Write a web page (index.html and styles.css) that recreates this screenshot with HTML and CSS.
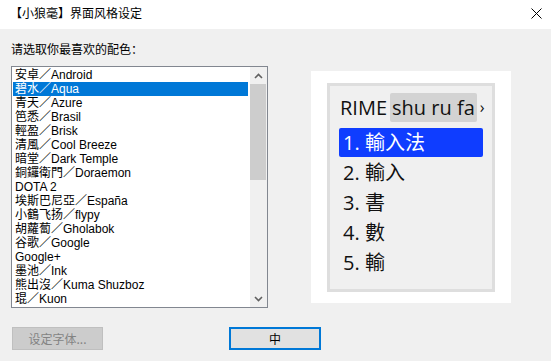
FILE: index.html
```html
<!DOCTYPE html>
<html lang="zh">
<head>
    <meta charset="UTF-8">
    <meta name="viewport" content="width=device-width, initial-scale=1.0">
    <title>【小狼毫】界面风格设定</title>
    <link rel="stylesheet" href="styles.css">
</head>
<body>
    <div class="titlebar">
        <span class="title">【小狼毫】界面风格设定</span>
        <svg class="close" width="11" height="11" viewBox="0 0 11 11">
            <path d="M0.5 0.5 L10.5 10.5 M10.5 0.5 L0.5 10.5" stroke="#000" stroke-width="1" fill="none"/>
        </svg>
    </div>
    <div class="window">
        <div class="main">
            <div class="left">
                <div class="label">请选取你最喜欢的配色：</div>
                <div class="listbox">
                    <ul class="items">
                        <li>安卓／Android</li>
                        <li class="selected">碧水／Aqua</li>
                        <li>青天／Azure</li>
                        <li>笆悉／Brasil</li>
                        <li>輕盈／Brisk</li>
                        <li>清風／Cool Breeze</li>
                        <li>暗堂／Dark Temple</li>
                        <li>銅鑼衛門／Doraemon</li>
                        <li>DOTA 2</li>
                        <li>埃斯巴尼亞／España</li>
                        <li>小鶴飞扬／flypy</li>
                        <li>胡蘿蔔／Gholabok</li>
                        <li>谷歌／Google</li>
                        <li>Google+</li>
                        <li>墨池／Ink</li>
                        <li>熊出沒／Kuma Shuzboz</li>
                        <li>琨／Kuon</li>
                    </ul>
                    <div class="scrollbar">
                        <div class="arrow">
                            <svg width="9" height="6" viewBox="0 0 9 6"><path d="M1 5 L4.5 1.5 L8 5" stroke="#606060" stroke-width="1.6" fill="none"/></svg>
                        </div>
                        <div class="track"><div class="thumb"></div></div>
                        <div class="arrow">
                            <svg width="9" height="6" viewBox="0 0 9 6"><path d="M1 1 L4.5 4.5 L8 1" stroke="#606060" stroke-width="1.6" fill="none"/></svg>
                        </div>
                    </div>
                </div>
            </div>
            <div class="preview">
                <div class="candidate-box">
                    <div class="preedit">
                        <span>RIME</span>
                        <span class="composing">shu ru fa</span>
                        <span class="caret">›</span>
                    </div>
                    <div class="candidates">
                        <div class="cand current">1. 輸入法</div>
                        <div class="cand">2. 輸入</div>
                        <div class="cand">3. 書</div>
                        <div class="cand">4. 數</div>
                        <div class="cand">5. 輸</div>
                    </div>
                </div>
            </div>
        </div>
        <div class="buttons">
            <button class="btn" disabled>设定字体...</button>
            <button class="btn default">中</button>
        </div>
    </div>
</body>
</html>
```

FILE: styles.css
```css
body {
    margin: 0;
    width: 551px;
    height: 361px;
    overflow: hidden;
    background-color: #f0f0f0;
    font-family: "Liberation Sans", "Noto Sans CJK SC", sans-serif;
    font-size: 12px;
    color: #000;
}
.titlebar {
    height: 29px;
    background-color: #fff;
    display: flex;
    align-items: center;
    justify-content: space-between;
    padding: 0 9px 0 10px;
}
.title {
    font-family: "Noto Sans CJK SC", sans-serif;
    line-height: 14px;
    margin-top: -4px;
}
.close {
    margin-top: -3px;
}
.window {
    padding: 13px 0 0 11px;
}
.main {
    display: flex;
}
.label {
    height: 14px;
    line-height: 14px;
    font-family: "Noto Sans CJK SC", sans-serif;
    margin-bottom: 10px;
}
.listbox {
    width: 255px;
    height: 240px;
    border: 1px solid #828790;
    background-color: #fff;
    display: flex;
}
.items {
    list-style: none;
    margin: 0;
    padding: 1px;
    width: 236px;
}
.items li {
    height: 14px;
    line-height: 14px;
    padding-left: 2px;
    white-space: nowrap;
}
.items li.selected {
    background-color: #0078d7;
    color: #fff;
}
.scrollbar {
    margin-left: 1px;
    width: 17px;
    background-color: #f0f0f0;
    display: flex;
    flex-direction: column;
}
.arrow {
    height: 17px;
    display: flex;
    align-items: center;
    justify-content: center;
}
.track {
    flex: 1;
}
.thumb {
    height: 96px;
    margin: 0 1px 0 0;
    background-color: #cdcdcd;
}
.preview {
    margin: 29px 0 0 43px;
    width: 200px;
    height: 232px;
    background-color: #fff;
}
.candidate-box {
    margin: 12px 0 0 16px;
    width: 168px;
    height: 209px;
    border: 3px solid #dedede;
    background-color: #f0f0f0;
    padding: 7px 0 0 0;
    box-sizing: border-box;
    font-family: "Open Sans", "Noto Sans CJK TC", sans-serif;
    font-size: 20px;
    color: #111;
}
.preedit {
    display: flex;
    align-items: center;
    height: 29px;
    line-height: 29px;
    padding-left: 10px;
}
.composing {
    margin-left: 3px;
    padding: 0 2px;
    background-color: #d3d3d3;
    border-radius: 2px;
}
.caret {
    margin-left: 3px;
    font-size: 16px;
}
.candidates {
    margin: 6px 0 0 9px;
    width: 144px;
}
.cand {
    height: 30px;
    line-height: 30px;
    padding-left: 4px;
    white-space: nowrap;
}
.cand.current {
    height: 29px;
    line-height: 29px;
    margin-bottom: 1px;
    background-color: #0f3dff;
    color: #fff;
    border-radius: 2px;
}
.buttons {
    display: flex;
    margin-top: 19px;
    padding-left: 1px;
}
.btn {
    width: 91px;
    height: 23px;
    margin: 0;
    padding: 0;
    font-family: "Noto Sans CJK SC", sans-serif;
    font-size: 12px;
    border: 1px solid #adadad;
    background-color: #e1e1e1;
    color: #000;
}
.btn:disabled {
    background-color: #cccccc;
    border-color: #bfbfbf;
    color: #838383;
}
.btn.default {
    margin-left: 126px;
    width: 92px;
    border: 2px solid #0078d7;
}
```
